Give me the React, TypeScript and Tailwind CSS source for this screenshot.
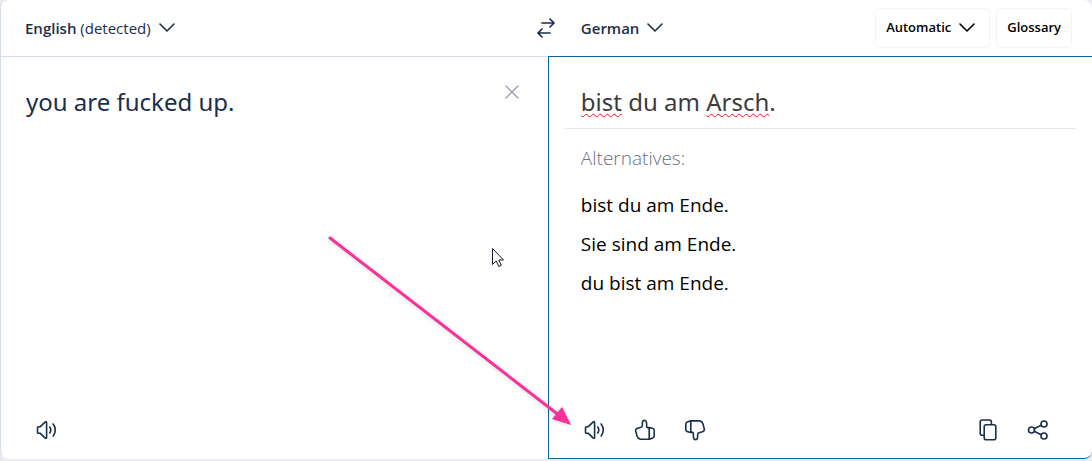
import React, { useState } from 'react';

const ALTERNATIVES = ['bist du am Ende.', 'Sie sind am Ende.', 'du bist am Ende.'];

const stroke = {
  fill: 'none',
  stroke: 'currentColor',
  strokeLinecap: 'round' as const,
  strokeLinejoin: 'round' as const,
};

function ChevronIcon() {
  return (
    <svg width="16" height="10" viewBox="0 0 16 10" {...stroke} strokeWidth="1.6" aria-hidden="true">
      <path d="M1 1l7 7 7-7" />
    </svg>
  );
}

function SwapIcon() {
  return (
    <svg width="20" height="20" viewBox="0 0 20 20" {...stroke} strokeWidth="1.7" aria-hidden="true">
      <path d="M6 5h12M14 1l4 4-4 4M14 15H2M6 11l-4 4 4 4" />
    </svg>
  );
}

function SpeakerIcon() {
  return (
    <svg width="22" height="20" viewBox="0 0 22 20" {...stroke} strokeWidth="1.6" aria-hidden="true">
      <path d="M1.5 7.6v4.8q0 .8.8.8H4l5 4.700q1.600 1.300 1.600-.7V2.800q0-2-1.600-.7l-5 4.700H2.300q-.8 0-.8.8z" />
      <path d="M13.800 7q2 3 0 6M17.200 4q4.200 6 0 12" />
    </svg>
  );
}

function ThumbIcon({ className = '' }: { className?: string }) {
  return (
    <svg width="22" height="22" viewBox="0 0 22 22" {...stroke} strokeWidth="1.6" className={className} aria-hidden="true">
      <path d="M15.200 8.600H13.500Q12.600 8.600 12.700 7.500L12.500 3.400Q12.200 1.400 10.400 1.400 8.600 1.400 8.500 3.200L8.300 6.800Q8.200 8 7 8.300L3.600 9.200Q1.300 9.900 1.700 12L3.100 17.300Q3.900 19.800 6.300 20.100L15.200 20.300z" />
      <path d="M15.200 8.600l3.300.7q1.700.4 1.700 2v5.400q0 1.700-1.500 2.200l-3.500 1.400" />
    </svg>
  );
}

function CopyIcon() {
  return (
    <svg width="20" height="22" viewBox="0 0 20 22" {...stroke} strokeWidth="1.6" aria-hidden="true">
      <path d="M5.500 16.200H4.200q-2 0-2-2V3q0-2 2-2h7.200q2 0 2 2v2.200" />
      <rect x="6.200" y="5.700" width="11.600" height="15" rx="2" />
    </svg>
  );
}

function ShareIcon() {
  return (
    <svg width="22" height="22" viewBox="0 0 22 22" {...stroke} strokeWidth="1.6" aria-hidden="true">
      <circle cx="4.500" cy="11" r="3" />
      <circle cx="17" cy="5" r="3" />
      <circle cx="17" cy="17" r="3" />
      <path d="M7.200 9.700l7-3.400M7.200 12.300l7 3.400" />
    </svg>
  );
}

function IconButton({ label, children }: { label: string; children: React.ReactNode }) {
  return (
    <button type="button" aria-label={label} className="flex size-10 items-center justify-center text-[#1b2e4b]">
      {children}
    </button>
  );
}

function Misspelled({ children }: { children: React.ReactNode }) {
  return (
    <span className="underline decoration-[#f01818] decoration-wavy decoration-1 underline-offset-2">{children}</span>
  );
}

export default function App() {
  const [source, setSource] = useState('you are fucked up.');

  return (
    <div className="relative flex min-h-screen flex-col bg-[#e9ebee] pb-0.5 font-['Open_Sans',sans-serif]">
      <div className="flex flex-1 flex-col rounded-lg border-l border-[#d5dde8] bg-white">
        <header className="grid h-14 grid-cols-[201fr_200fr] text-[15px] text-[#1b2e4b]">
          <div className="flex items-center justify-between pl-6">
            <button type="button" className="flex items-center gap-2">
              <span>
                <span className="font-semibold">English</span> (detected)
              </span>
              <ChevronIcon />
            </button>
            <button type="button" aria-label="Swap languages" className="-mr-2">
              <SwapIcon />
            </button>
          </div>
          <div className="flex items-center justify-between pr-5 pl-[33px]">
            <button type="button" className="flex items-center gap-2 font-semibold">
              German
              <ChevronIcon />
            </button>
            <div className="flex gap-1.5 text-[13px] font-semibold text-black">
              <button type="button" className="flex h-10 items-center gap-2 rounded-sm border border-gray-100 pr-3.5 pl-2.5">
                Automatic
                <ChevronIcon />
              </button>
              <button type="button" className="h-10 rounded-sm border border-gray-100 px-2.5">
                Glossary
              </button>
            </div>
          </div>
        </header>

        <main className="grid flex-1 grid-cols-[201fr_200fr]">
          <section className="flex flex-col border-t border-[#d5dde8]">
            <div className="flex flex-1 items-start pt-[27px] pr-7 pl-[25px]">
              <textarea
                aria-label="Source text"
                spellCheck={false}
                value={source}
                onChange={(e) => setSource(e.target.value)}
                className="h-40 min-w-0 flex-1 resize-none font-['Noto_Sans',sans-serif] text-2xl leading-9 text-[#1b2e4b] outline-none"
              />
              <button type="button" aria-label="Clear text" className="text-[#9aa1ac]">
                <svg width="16" height="16" viewBox="0 0 16 16" {...stroke} strokeWidth="1.4" aria-hidden="true">
                  <path d="M2 2l12 12M14 2L2 14" />
                </svg>
              </button>
            </div>
            <div className="flex pb-[9px] pl-[26px]">
              <IconButton label="Listen to source">
                <SpeakerIcon />
              </IconButton>
            </div>
          </section>

          <section className="flex flex-col rounded-br-lg border border-r-0 border-[#0f6497]">
            <div className="flex-1 px-4 pt-[27px]">
              <p className="border-b border-gray-200 px-4 pb-2 font-['Noto_Sans',sans-serif] text-2xl leading-9 text-[#3c3c3c]">
                <Misspelled>bist</Misspelled> du am <Misspelled>Arsch</Misspelled>.
              </p>
              <div className="px-4 pt-[15px] text-[19px] leading-7">
                <h2 className="font-light text-gray-500">Alternatives:</h2>
                <ul className="mt-[13px] text-black">
                  {ALTERNATIVES.map((text) => (
                    <li key={text}>
                      <button type="button" className="block h-[39px]">{text}</button>
                    </li>
                  ))}
                </ul>
              </div>
            </div>
            <div className="flex items-center justify-between pr-[34px] pb-2 pl-[26px]">
              <div className="flex gap-2.5">
                <IconButton label="Listen to translation">
                  <SpeakerIcon />
                </IconButton>
                <IconButton label="Good translation">
                  <ThumbIcon />
                </IconButton>
                <IconButton label="Bad translation">
                  <ThumbIcon className="rotate-180" />
                </IconButton>
              </div>
              <div className="flex gap-2.5">
                <IconButton label="Copy">
                  <CopyIcon />
                </IconButton>
                <IconButton label="Share">
                  <ShareIcon />
                </IconButton>
              </div>
            </div>
          </section>
        </main>
      </div>

      {/* Arrow pointing at the listen button */}
      <svg
        width="246"
        height="194"
        viewBox="0 0 246 194"
        className="pointer-events-none absolute top-[235px] left-[327px] drop-shadow-sm"
        aria-hidden="true"
      >
        <path d="M3 3L233 181" stroke="#fb3199" strokeWidth="3" strokeLinecap="round" />
        <path d="M244 190L225 184L235 172Z" fill="#fb3199" />
      </svg>

      {/* Mouse pointer */}
      <svg
        width="14"
        height="21"
        viewBox="0 0 14 21"
        className="pointer-events-none absolute top-[247px] left-[491px]"
        aria-hidden="true"
      >
        <path d="M1.500 1.500v16l3.700-3.500 2.600 5.500 2.500-1.200-2.500-5.300h4.700z" fill="#fff" stroke="#1c1c28" />
      </svg>
    </div>
  );
}
